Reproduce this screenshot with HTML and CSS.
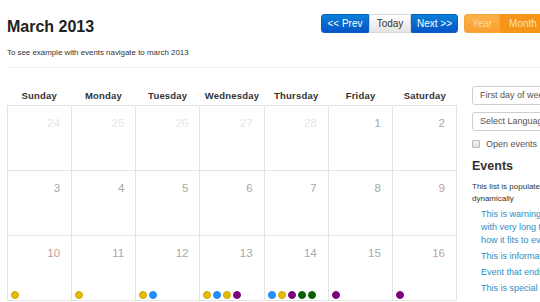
FILE: index.html
```html
<!DOCTYPE html>
<html>
<head>
<meta charset="utf-8">
<link rel="stylesheet" href="styles.css">
</head>
<body>
<div class="page">
  <div class="top">
    <h3 class="title">March 2013</h3>
    <div class="controls">
      <div class="btn-group">
        <button class="btn btn-primary btn-first w-prev">&lt;&lt; Prev</button>
        <button class="btn btn-default w-today">Today</button>
        <button class="btn btn-primary btn-last w-next">Next &gt;&gt;</button>
      </div>
      <div class="btn-group">
        <button class="btn btn-warning btn-first w-year">Year</button>
        <button class="btn btn-warning active w-month">Month</button>
      </div>
    </div>
  </div>
  <p class="subtitle">To see example with events navigate to march 2013</p>
  <div class="rule"></div>
  <div class="main">
    <div class="calendar">
      <div class="weekdays">
        <div>Sunday</div><div>Monday</div><div>Tuesday</div><div>Wednesday</div><div>Thursday</div><div>Friday</div><div>Saturday</div>
      </div>
      <div class="grid">
        <div class="cell"><span class="num out">24</span></div>
        <div class="cell"><span class="num out">25</span></div>
        <div class="cell"><span class="num out">26</span></div>
        <div class="cell"><span class="num out">27</span></div>
        <div class="cell"><span class="num out">28</span></div>
        <div class="cell"><span class="num">1</span></div>
        <div class="cell"><span class="num">2</span></div>

        <div class="cell"><span class="num">3</span></div>
        <div class="cell"><span class="num">4</span></div>
        <div class="cell"><span class="num">5</span></div>
        <div class="cell"><span class="num">6</span></div>
        <div class="cell"><span class="num">7</span></div>
        <div class="cell"><span class="num">8</span></div>
        <div class="cell"><span class="num weekend">9</span></div>

        <div class="cell"><span class="num weekend">10</span>
          <div class="events"><i class="ev warning"></i></div></div>
        <div class="cell"><span class="num">11</span>
          <div class="events"><i class="ev warning"></i></div></div>
        <div class="cell"><span class="num">12</span>
          <div class="events"><i class="ev warning"></i><i class="ev info"></i></div></div>
        <div class="cell"><span class="num">13</span>
          <div class="events"><i class="ev warning"></i><i class="ev info"></i><i class="ev warning"></i><i class="ev special"></i></div></div>
        <div class="cell"><span class="num">14</span>
          <div class="events"><i class="ev info"></i><i class="ev warning"></i><i class="ev special"></i><i class="ev success"></i><i class="ev success"></i></div></div>
        <div class="cell"><span class="num">15</span>
          <div class="events"><i class="ev special"></i></div></div>
        <div class="cell"><span class="num weekend">16</span>
          <div class="events"><i class="ev special"></i></div></div>
      </div>
    </div>
    <div class="sidebar">
      <div class="select">First day of week</div>
      <div class="select second">Select Language</div>
      <label class="check"><span class="box"></span>Open events</label>
      <h4 class="events-title">Events</h4>
      <p class="note">This list is populated with events dynamically</p>
      <ul class="event-list">
        <li>This is warning class event with very long title to check how it fits to evet in day view</li>
        <li>This is information class</li>
        <li>Event that ends on timeline</li>
        <li>This is special event</li>
      </ul>
    </div>
  </div>
</div>
</body>
</html>
```

FILE: styles.css
```css
html, body {
  margin: 0;
  padding: 0;
  background: #fff;
  overflow: hidden;
}
body {
  width: 540px;
  height: 302px;
  font-family: "Liberation Sans", Arial, sans-serif;
  color: #333;
}
.page {
  padding-left: 7px;
  width: 800px;
}
.top {
  display: flex;
  align-items: flex-start;
  padding-top: 14px;
}
.title {
  flex: 0 0 314px;
  margin: 3px 0 0 0;
  font-size: 16px;
  line-height: 20px;
  font-weight: bold;
  color: #222;
}
.controls {
  display: flex;
  gap: 6px;
  flex: none;
}
.btn-group {
  display: flex;
}
.btn {
  font-family: "Liberation Sans", Arial, sans-serif;
  font-size: 10px;
  height: 19px;
  line-height: 17px;
  padding: 0;
  margin: 0;
  border: 1px solid transparent;
  border-radius: 0;
  text-align: center;
  cursor: pointer;
}
.w-prev { width: 48px; }
.w-today { width: 42px; }
.w-next { width: 47px; }
.w-year { width: 36px; }
.w-month { width: 46px; }
.btn-first { border-radius: 3px 0 0 3px; }
.btn-last { border-radius: 0 3px 3px 0; }
.btn-primary {
  background: linear-gradient(#0a80d8, #0455c6);
  border-color: #0a5fc4;
  color: #fff;
}
.btn-default {
  background: linear-gradient(#ffffff, #e4e4e4);
  border-color: #d8d8d8;
  color: #333;
}
.btn-warning {
  background: linear-gradient(#fbb24b, #f8a030);
  border-color: #f6a43a;
  color: #fcd9a2;
}
.btn-warning.active {
  background: #f7941a;
  border-color: #f7941a;
  color: #fde1bb;
}
.subtitle {
  margin: 11px 0 0 0;
  font-size: 7.9px;
  line-height: 10px;
  color: #333;
}
.rule {
  margin-top: 9px;
  width: 533px;
  height: 1px;
  background: #f0f0f0;
}
.main {
  display: flex;
  margin-top: 18px;
}
.calendar {
  width: 450px;
  flex: none;
}
.weekdays {
  display: grid;
  grid-template-columns: repeat(7, 1fr);
  height: 19px;
  line-height: 19px;
  font-size: 9.5px;
  font-weight: bold;
  text-align: center;
  color: #333;
  letter-spacing: 0.2px;
}
.grid {
  display: grid;
  grid-template-columns: repeat(7, 1fr);
  grid-auto-rows: 65px;
  border-left: 1px solid #e4e4e4;
  border-top: 1px solid #e4e4e4;
}
.cell {
  border-right: 1px solid #e4e4e4;
  border-bottom: 1px solid #e4e4e4;
  display: flex;
  flex-direction: column;
  align-items: flex-end;
  padding: 10px 11px 0 3px;
  box-sizing: border-box;
}
.num {
  font-size: 11.5px;
  line-height: 14px;
  color: #a8a8a8;
}
.num.out { color: #e6e6e6; }
.num.weekend { color: #c3a0a0; }
.events {
  margin-top: auto;
  align-self: stretch;
  display: flex;
  gap: 2px;
  padding-bottom: 1px;
}
.ev {
  width: 6px;
  height: 6px;
  border-radius: 50%;
  border: 1px solid;
  display: block;
}
.ev.warning { background: #e3bc08; border-color: #cfa808; }
.ev.info { background: #1e90ff; border-color: #1e88ee; }
.ev.special { background: #800080; border-color: #7a077a; }
.ev.success { background: #006400; border-color: #0a5e0a; }
.sidebar {
  margin-left: 15px;
  width: 124px;
  flex: none;
}
.select {
  width: 150px;
  height: 19px;
  box-sizing: border-box;
  border: 1px solid #cfcfcf;
  border-radius: 3px;
  padding-left: 7px;
  font-size: 9px;
  line-height: 17px;
  color: #555;
  white-space: nowrap;
  overflow: hidden;
}
.select.second { margin-top: 7px; }
.check {
  display: flex;
  align-items: center;
  margin-top: 6px;
  height: 13px;
  font-size: 9px;
  color: #555;
  white-space: nowrap;
}
.box {
  flex: none;
  width: 6px;
  height: 6px;
  border: 1px solid #bcbcbc;
  border-radius: 1px;
  background: linear-gradient(#f6f6f6, #dedede);
  margin: 0 6px 0 0;
}
.events-title {
  margin: 9px 0 0 0;
  font-size: 12.5px;
  line-height: 15px;
  font-weight: bold;
  color: #333;
}
.note {
  margin: 7px 0 0 0;
  font-size: 8px;
  line-height: 12px;
  color: #333;
}
.event-list {
  list-style: none;
  margin: 3px 0 0 0;
  padding: 0 0 0 9px;
  font-size: 9px;
  line-height: 13px;
  color: #2b8fc4;
}
.event-list li { margin-bottom: 3px; }
```
